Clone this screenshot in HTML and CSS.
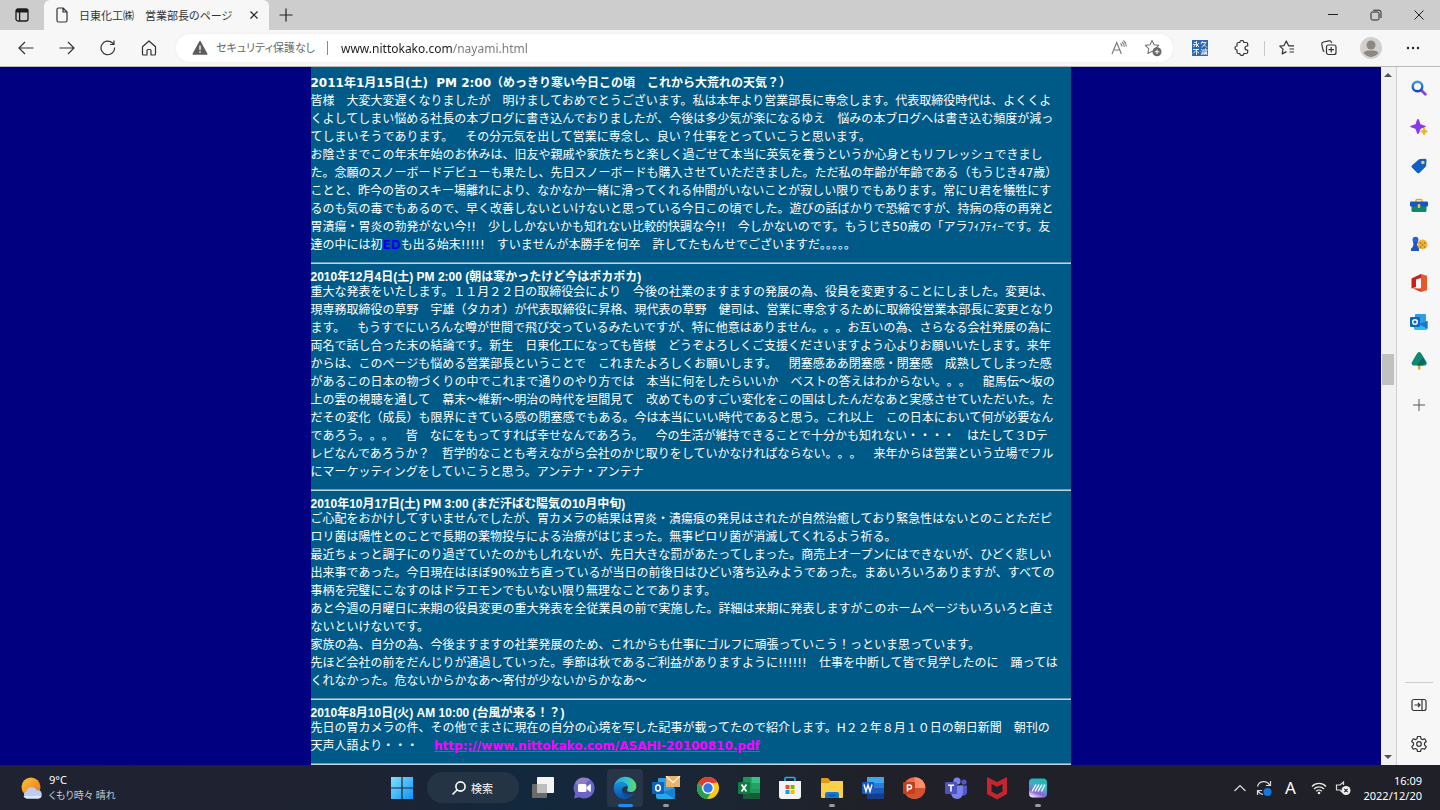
FILE: index.html
```html
<!DOCTYPE html>
<html lang="ja">
  <head>
    <meta charset="UTF-8" />
    <meta name="viewport" content="width=device-width, initial-scale=1.0" />
    <title>日東化工㈱　営業部長のページ</title>
    <link rel="stylesheet" href="styles.css">
  </head>
  <body>
    <header class="browser">
      <div class="tab-bar">
        <button class="tab-menu" aria-label="タブ操作メニュー">
          <svg width="14" height="14" viewBox="0 0 14 14" fill="none" stroke="#1c1c1c" stroke-width="1.3">
            <rect x="1" y="1" width="12" height="12" rx="2" />
            <path d="M1 2.8h12" stroke-width="3.4" />
            <path d="M4.6 4v9" />
          </svg>
        </button>
        <div class="tab">
          <svg width="12" height="16" viewBox="0 0 12 16" fill="none" stroke="#333" stroke-width="1.2" stroke-linejoin="round">
            <path d="M2.5 1H7l4 4v8.5a1.5 1.5 0 0 1-1.5 1.5h-7A1.5 1.5 0 0 1 1 13.5v-11A1.5 1.5 0 0 1 2.5 1zM7 1v4h4" />
          </svg>
          <span class="tab-title">日東化工㈱　営業部長のページ</span>
          <button class="tab-close" aria-label="タブを閉じる">
            <svg width="8" height="8" viewBox="0 0 8 8" stroke="#222" stroke-width="1.2"><path d="M.5.5l7 7M7.5.5l-7 7" /></svg>
          </button>
        </div>
        <button class="new-tab" aria-label="新しいタブ">
          <svg width="14" height="14" viewBox="0 0 14 14" stroke="#222" stroke-width="1.2"><path d="M7 .5v13M.5 7h13" /></svg>
        </button>
        <div class="window-controls">
          <button aria-label="最小化">
            <svg width="12" height="12" viewBox="0 0 12 12" stroke="#222"><path d="M1 5.5h10" /></svg>
          </button>
          <button aria-label="元に戻す">
            <svg width="12" height="12" viewBox="0 0 12 12" fill="none" stroke="#222">
              <rect x="1" y="3" width="8" height="8" rx="1.5" />
              <path d="M3.3 1.2H9a2 2 0 0 1 2 2V9" />
            </svg>
          </button>
          <button aria-label="閉じる">
            <svg width="12" height="12" viewBox="0 0 12 12" stroke="#222"><path d="M1.5 1.5l9 9M10.5 1.5l-9 9" /></svg>
          </button>
        </div>
      </div>

      <div class="toolbar">
        <nav class="nav-buttons">
          <button aria-label="戻る">
            <svg width="16" height="16" viewBox="0 0 16 16" fill="none" stroke="#333" stroke-width="1.2"><path d="M15.5 8H1M7 2L1 8l6 6" /></svg>
          </button>
          <button aria-label="進む">
            <svg width="16" height="16" viewBox="0 0 16 16" fill="none" stroke="#333" stroke-width="1.2"><path d="M.5 8H15M9 2l6 6-6 6" /></svg>
          </button>
          <button aria-label="更新">
            <svg width="16" height="16" viewBox="0 0 16 16" fill="none" stroke="#333" stroke-width="1.2"><path d="M14.6 7.5A6.8 6.8 0 1 1 12.5 3L14 4.4M14 .5v4h-4" /></svg>
          </button>
          <button aria-label="ホーム">
            <svg width="16" height="16" viewBox="0 0 16 16" fill="none" stroke="#333" stroke-width="1.2" stroke-linejoin="round"><path d="M1.5 6.8L8 1l6.5 5.8V14a1 1 0 0 1-1 1H10v-4.5a1 1 0 0 0-1-1H7a1 1 0 0 0-1 1V15H2.5a1 1 0 0 1-1-1z" /></svg>
          </button>
        </nav>

        <div class="address-bar">
          <svg width="16" height="16" viewBox="0 0 16 16">
            <path d="M8 1.5L14.8 14H1.2z" fill="#5c5c5c" stroke="#5c5c5c" stroke-width="1.5" stroke-linejoin="round" />
            <path d="M8 5.5v4.5M8 11.3v1.5" stroke="#fff" stroke-width="1.3" />
          </svg>
          <label class="security" for="url">セキュリティ保護なし</label>
          <input type="text" id="url" class="url" value="www.nittokako.com/nayami.html" />
          <button aria-label="音声で読み上げる">
            <svg width="16" height="16" viewBox="0 0 16 16" fill="none" stroke="#777" stroke-width="1.1"><path d="M1 14L5.7 2.5 10.4 14M2.6 10h6.2M9.5 3.5a4 4 0 0 1 1.5 3M11 2a6 6 0 0 1 2.2 5M12.5.5a8 8 0 0 1 2.7 6" /></svg>
          </button>
          <button aria-label="お気に入りに追加">
            <svg width="18" height="18" viewBox="0 0 18 18">
              <path d="M8 1.5l2 4.3 4.7.6-3.4 3.3.8 4.6L8 12.2l-4.1 2.2.8-4.7L1.3 6.4 6 5.8z" fill="none" stroke="#777" stroke-width="1.1" stroke-linejoin="round" />
              <circle cx="13" cy="12.8" r="4.5" fill="#666" />
              <path d="M13 10.5v4.6M10.7 12.8h4.6" stroke="#fff" />
            </svg>
          </button>
        </div>

        <div class="tool-buttons">
          <button aria-label="永久不滅プラス">
            <svg width="16" height="16" viewBox="0 0 16 16">
              <rect width="16" height="16" fill="#2f67b1" />
              <path d="M4.5 1v6M2 2.500h3M1 4.500h2.500L1.500 7M7 3L5 5l2 2M10.500 1L9 4M10 2.500h4L10 7.500M12 4.500l3 3M1 9.500h6M4.500 9.500V15M4 10.500l-3 3M5 11.500l2 1.500M9 9l1 1M8.700 11.500l1 1M9 15l1.500-2.500M10.500 10h5M11 10v5M13.500 8.500L15 15M12 12h1.500v1.500H12zM15 12l-2.500 3" fill="none" stroke="#e3ecf8" />
            </svg>
          </button>
          <button aria-label="拡張機能">
            <svg width="16" height="16" viewBox="0 0 16 16" fill="none" stroke="#333" stroke-width="1.2" stroke-linejoin="round"><path d="M5.8 2.500a2 2 0 0 1 4 0h2.400a1.500 1.500 0 0 1 1.500 1.500V6h-.7a2 2 0 0 0 0 4h.7v2a1.500 1.500 0 0 1-1.500 1.500h-2.400a2 2 0 0 1-4 0H4.500A1.500 1.500 0 0 1 3 12V10a2 2 0 0 1 0-4V4a1.500 1.500 0 0 1 1.500-1.500z" /></svg>
          </button>
        </div>
        <div class="tool-buttons with-divider">
          <button aria-label="お気に入り">
            <svg width="16" height="16" viewBox="0 0 16 16" fill="none" stroke="#333" stroke-width="1.2" stroke-linejoin="round"><path d="M9.2 5.800H15M10.500 9H15M10.500 12H15M9.500 5.600L7.300 1 5 5.600.8 6.100l3.200 3-.8 4.800L7.500 11.600" /></svg>
          </button>
          <button aria-label="コレクション">
            <svg width="16" height="16" viewBox="0 0 16 16" fill="none" stroke="#333" stroke-width="1.2"><rect x="5.5" y="5" width="9.5" height="9.5" rx="2" /><path d="M10.2 7v5.500M7.500 9.700H13M3.500 11.500A2 2 0 0 1 2 10L.8 4.200A2 2 0 0 1 2.300 2L8 .8a2 2 0 0 1 2.400 1.600L10.600 3" /></svg>
          </button>
          <button aria-label="プロファイル">
            <svg width="22" height="22" viewBox="0 0 22 22">
              <circle cx="11" cy="11" r="11" fill="#d2d0ce" />
              <circle cx="11" cy="8" r="4.5" fill="#8d8782" />
              <path d="M3.7 16c1-2 3-2.500 7.300-2.500s6.300.5 7.300 2.500a8.800 8.800 0 0 1-14.600 0z" fill="#8d8782" />
            </svg>
          </button>
          <button aria-label="設定など">
            <svg width="14" height="4" viewBox="0 0 14 4" fill="#222"><circle cx="2" cy="2" r="1.2" /><circle cx="7" cy="2" r="1.2" /><circle cx="12" cy="2" r="1.2" /></svg>
          </button>
        </div>
      </div>
    </header>

    <div class="window-body">
      <div class="viewport">
        <main class="page">
          <article>
            <h2 class="meiryo">2011年1月15日(土)&nbsp; PM 2:00（めっきり寒い今日この頃　これから大荒れの天気？）</h2>
            <p>
              皆様　大変大変遅くなりましたが　明けましておめでとうございます。私は本年より営業部長に専念します。代表取締役時代は、よくくよ<br>
              くよしてしまい悩める社長の本ブログに書き込んでおりましたが、今後は多少気が楽になるゆえ　悩みの本ブログへは書き込む頻度が減っ<br>
              てしまいそうであります。　その分元気を出して営業に専念し、良い？仕事をとっていこうと思います。<br>
              お陰さまでこの年末年始のお休みは、旧友や親戚や家族たちと楽しく過ごせて本当に英気を養うというか心身ともリフレッシュできまし<br>
              た。念願のスノーボードデビューも果たし、先日スノーボードも購入させていただきました。ただ私の年齢が年齢である（もうじき47歳）<br>
              ことと、昨今の皆のスキー場離れにより、なかなか一緒に滑ってくれる仲間がいないことが寂しい限りでもあります。常にＵ君を犠牲にす<br>
              るのも気の毒でもあるので、早く改善しないといけないと思っている今日この頃でした。遊びの話ばかりで恐縮ですが、持病の痔の再発と<br>
              胃潰瘍・胃炎の勃発がない今!!　少ししかないかも知れない比較的快調な今!!　今しかないのです。もうじき50歳の「アラﾌｨﾌﾃｨｰです。友<br>
              達の中には初<b class="ed">ED</b>も出る始末!!!!!　すいませんが本勝手を何卒　許してたもんせでございますだ｡｡｡｡｡
            </p>
          </article>
          <hr>
          <article>
            <h2>2010年12月4日(土) PM 2:00 (朝は寒かったけど今はポカポカ)</h2>
            <p>
              重大な発表をいたします。１１月２２日の取締役会により　今後の社業のますますの発展の為、役員を変更することにしました。変更は、<br>
              現専務取締役の草野　宇雄（タカオ）が代表取締役に昇格、現代表の草野　健司は、営業に専念するために取締役営業本部長に変更となり<br>
              ます。　もうすでにいろんな噂が世間で飛び交っているみたいですが、特に他意はありません。。。お互いの為、さらなる会社発展の為に<br>
              両名で話し合った末の結論です。新生　日東化工になっても皆様　どうぞよろしくご支援くださいますよう心よりお願いいたします。来年<br>
              からは、このページも悩める営業部長ということで　これまたよろしくお願いします。　閉塞感ああ閉塞感・閉塞感　成熟してしまった感<br>
              があるこの日本の物づくりの中でこれまで通りのやり方では　本当に何をしたらいいか　ベストの答えはわからない。。。　龍馬伝～坂の<br>
              上の雲の視聴を通して　幕末～維新～明治の時代を垣間見て　改めてものすごい変化をこの国はしたんだなあと実感させていただいた。た<br>
              だその変化（成長）も限界にきている感の閉塞感でもある。今は本当にいい時代であると思う。これ以上　この日本において何が必要なん<br>
              であろう。。。　皆　なにをもってすれば幸せなんであろう。　今の生活が維持できることで十分かも知れない・・・・　はたして３Dテ<br>
              レビなんであろうか？　哲学的なことも考えながら会社のかじ取りをしていかなければならない。。。　来年からは営業という立場でフル<br>
              にマーケッティングをしていこうと思う。アンテナ・アンテナ
            </p>
          </article>
          <hr>
          <article>
            <h2>2010年10月17日(土) PM 3:00 (まだ汗ばむ陽気の10月中旬)</h2>
            <p>
              ご心配をおかけしてすいませんでしたが、胃カメラの結果は胃炎・潰瘍痕の発見はされたが自然治癒しており緊急性はないとのことただピ<br>
              ロリ菌は陽性とのことで長期の薬物投与による治療がはじまった。無事ピロリ菌が消滅してくれるよう祈る。<br>
              最近ちょっと調子にのり過ぎていたのかもしれないが、先日大きな罰があたってしまった。商売上オープンにはできないが、ひどく悲しい<br>
              出来事であった。今日現在はほぼ90%立ち直っているが当日の前後日はひどい落ち込みようであった。まあいろいろありますが、すべての<br>
              事柄を完璧にこなすのはドラエモンでもいない限り無理なことであります。<br>
              あと今週の月曜日に来期の役員変更の重大発表を全従業員の前で実施した。詳細は来期に発表しますがこのホームページもいろいろと直さ<br>
              ないといけないです。<br>
              家族の為、自分の為、今後ますますの社業発展のため、これからも仕事にゴルフに頑張っていこう！っといま思っています。<br>
              先ほど会社の前をだんじりが通過していった。季節は秋であるご利益がありますように!!!!!!　仕事を中断して皆で見学したのに　踊っては<br>
              くれなかった。危ないからかなあ～寄付が少ないからかなあ～
            </p>
          </article>
          <hr>
          <article>
            <h2>2010年8月10日(火) AM 10:00 (台風が来る！？)</h2>
            <p>
              先日の胃カメラの件、その他でまさに現在の自分の心境を写した記事が載ってたので紹介します。H２２年８月１０日の朝日新聞　朝刊の<br>
              天声人語より・・・　 <a href="#">http:;//www.nittokako.com/ASAHI-20100810.pdf</a>
            </p>
          </article>
          <hr>
        </main>
      </div>

      <div class="scrollbar" aria-hidden="true">
        <span class="arrow up"></span>
        <span></span>
        <span class="thumb"></span>
        <span></span>
        <span class="arrow down"></span>
      </div>

      <aside class="sidebar">
        <button aria-label="検索">
          <svg width="16" height="16" viewBox="0 0 16 16" fill="none">
            <path d="M10 10l4.3 4.3" stroke="#8b3ff0" stroke-width="2.8" stroke-linecap="round" />
            <circle cx="6.5" cy="6.5" r="4.8" stroke="url(#lens)" stroke-width="2.4" />
            <defs><linearGradient id="lens" x1="0" y1="0" x2="0" y2="1"><stop stop-color="#3a9be0" /><stop offset="1" stop-color="#1546c8" /></linearGradient></defs>
          </svg>
        </button>
        <button aria-label="検出">
          <svg width="18" height="18" viewBox="0 0 18 18">
            <path d="M8 1c.5 0 .8.3 1 .8l1.200 3.600c.2.600.5.900 1.100 1.100L15 7.700c1 .3 1 1.300 0 1.600l-3.700 1.200c-.6.200-.9.500-1.100 1.100L9 15.200c-.3 1-1.700 1-2 0l-1.200-3.600c-.2-.6-.5-.9-1.100-1.100L1 9.300c-1-.3-1-1.300 0-1.600l3.700-1.200c.6-.2.900-.5 1.100-1.100L7 1.800c.2-.5.500-.8 1-.8z" fill="#8c38ec" />
            <path d="M14 10l1 2.500 2.500 1-2.500 1-1 2.500-1-2.500-2.500-1 2.500-1z" fill="#f0b51e" stroke="#f0b51e" />
          </svg>
        </button>
        <button aria-label="ショッピング">
          <svg width="18" height="18" viewBox="0 0 18 18"><path d="M10.500 2L15 1.800c1 0 1.500.5 1.500 1.500l-.3 5c0 .6-.2 1-.6 1.400l-6 6c-.8.8-1.700.8-2.500 0l-5-5c-.8-.8-.8-1.700 0-2.500L8.500 2.700c.5-.5 1-.7 2-.7z" fill="#1360c4" /><circle cx="12.8" cy="5.5" r="1.8" fill="#f6cc48" /></svg>
        </button>
        <button aria-label="ツール">
          <svg width="18" height="18" viewBox="0 0 18 18"><path d="M6 6V4.500c0-.6.400-1 1-1h4c.6 0 1 .4 1 1V6" fill="none" stroke="#e2a928" stroke-width="1.3" /><path d="M1.500 9h15v5.500A1.500 1.500 0 0 1 15 16H3a1.500 1.500 0 0 1-1.500-1.500z" fill="#12856b" /><rect x="0" y="5.5" width="18" height="5" rx="1.2" fill="#1456c8" /><rect x="7.7" y="8" width="2.6" height="4" rx="1" fill="#f2c23c" /></svg>
        </button>
        <button aria-label="ゲーム">
          <svg width="18" height="18" viewBox="0 0 18 18"><circle cx="5.5" cy="4.8" r="3" fill="#2864d8" /><path d="M3 7h5v1.200H7c0 2 .5 3.300 2 4.500V16H1v-2.500c2.200-1.500 2.500-3 2.500-5.300H3z" fill="#1b55c8" /><circle cx="12.5" cy="9.5" r="5" fill="#efb43c" /><g fill="#9a6512"><circle cx="10.5" cy="8" r=".8" /><circle cx="14.5" cy="8" r=".8" /><circle cx="12.5" cy="10" r=".8" /><circle cx="10.5" cy="12" r=".8" /><circle cx="14.5" cy="12" r=".8" /></g></svg>
        </button>
        <button aria-label="Office">
          <svg width="18" height="18" viewBox="0 0 18 18"><path d="M11 0l6 1.800v14.400L11 18z" fill="#e8572a" /><path d="M1.500 4.500L11 0v4L6 5.500v7.500l-4.500 1.500z" fill="#c8201a" /><path d="M2.500 14.300L11 14.500V18z" fill="#e03a20" /></svg>
        </button>
        <button aria-label="Outlook">
          <svg width="18" height="18" viewBox="0 0 18 18"><rect x="5" y="1" width="11" height="14" rx="1" fill="#2e9de6" /><path d="M4 8l6.500 4L17.500 7.500V15a2 2 0 0 1-2 2h-10A1.500 1.500 0 0 1 4 15.500z" fill="#2bbdf0" /><path d="M17.500 8v8L9 11z" fill="#1778c9" /><rect x="0" y="4" width="10" height="10" rx="1" fill="#0f67b8" /><circle cx="5" cy="9" r="2.300" fill="none" stroke="#fff" stroke-width="1.4" /></svg>
        </button>
        <button aria-label="ドロップ">
          <svg width="18" height="18" viewBox="0 0 18 18"><path d="M8 11h2.400v6.500H8z" fill="#dda325" /><path d="M9.200 0c1.200 0 2.300 1.800 3.400 3.600l3.500 6c1.400 2.300.5 4-2 4H4.300c-2.500 0-3.400-1.700-2-4l3.500-6C6.900 1.800 8 0 9.200 0z" fill="#128873" /><path d="M9 10l4-4 2.600 4-2.600 3.600H7z" fill="#0b6a62" /></svg>
        </button>
        <button class="add" aria-label="カスタマイズ">
          <svg width="12" height="12" viewBox="0 0 12 12" stroke="#555"><path d="M6 0v12M0 6h12" /></svg>
        </button>
        <div class="sidebar-bottom">
          <button aria-label="サイドバーを隠す">
            <svg width="16" height="14" viewBox="0 0 16 14" fill="none" stroke="#333" stroke-width="1.2"><rect x="1" y="1.5" width="14" height="11" rx="2" /><path d="M11 1.500v11M3.500 7H9M7 5l2 2-2 2" /></svg>
          </button>
          <button aria-label="設定">
            <svg width="18" height="18" viewBox="0 0 18 18" fill="none" stroke="#333" stroke-width="1.2" stroke-linejoin="round"><path d="M7.500 1.500h3l.5 2.300 1.500.8 2.200-.8 1.600 2.700L14.500 8v2l1.800 1.600-1.600 2.700-2.200-.8-1.500.8-.5 2.200h-3L7 14.300l-1.500-.8-2.200.8-1.600-2.700L3.500 10V8L1.700 6.500l1.600-2.700 2.200.8L7 3.800z" /><circle cx="9" cy="9" r="2.3" /></svg>
          </button>
        </div>
      </aside>
    </div>

    <footer class="taskbar">
      <button class="weather">
        <svg width="22" height="22" viewBox="0 0 22 22">
          <defs><linearGradient id="sun" x1="0" y1="0" x2="1" y2="1"><stop stop-color="#f8c63a" /><stop offset="1" stop-color="#ee6d18" /></linearGradient></defs>
          <circle cx="10" cy="10" r="9.5" fill="url(#sun)" />
          <path d="M5.500 21.500a4 4 0 0 1 0-7.500 5.500 5.500 0 0 1 10.300-.5 4 4 0 0 1 1.700 8z" fill="#bccdf1" />
          <path d="M5.500 21.500a4 4 0 0 1-3-2.500h18a4 4 0 0 1-3 2.500z" fill="#dfe8fb" />
        </svg>
        <span class="weather-text">9°C<br><span class="weather-desc">くもり時々 晴れ</span></span>
      </button>

      <div class="task-center">
        <button class="app" aria-label="スタート">
          <svg width="22" height="22" viewBox="0 0 22 22"><defs><linearGradient id="win" x1="0" y1="0" x2="1" y2="1"><stop stop-color="#7fe0fd" /><stop offset="1" stop-color="#0f93f5" /></linearGradient></defs><path d="M0 0h10.400v10.400H0zM11.600 0H22v10.400H11.600zM0 11.600h10.400V22H0zM11.600 11.600H22V22H11.600z" fill="url(#win)" /></svg>
        </button>
        <button class="search">
          <svg width="14" height="14" viewBox="0 0 14 14" fill="none" stroke="#fff" stroke-width="1.6" stroke-linecap="round"><circle cx="8.5" cy="5.5" r="4.6" /><path d="M5 9l-4 4" /></svg>
          検索
        </button>
        <div class="apps">
          <button class="app" aria-label="タスク ビュー">
            <svg width="24" height="24" viewBox="0 0 24 24"><rect x="1" y="8" width="15" height="14" rx="1" fill="#6a6a6a" /><rect x="6" y="1" width="17" height="16" rx="1" fill="#f4f4f4" /><path d="M6 8h10v9H6z" fill="#bdbdbd" /></svg>
          </button>
          <button class="app" aria-label="チャット">
            <svg width="24" height="24" viewBox="0 0 24 24"><path d="M12 1.500a10.500 10.500 0 1 1-4.800 19.800L2 22.500l1.200-5A10.500 10.500 0 0 1 12 1.500z" fill="#6a63c8" /><path d="M3.200 6.500A10.500 10.500 0 0 1 18 3.500L8 12z" fill="#8e80c8" /><rect x="6" y="8" width="8.5" height="8" rx="1.5" fill="#fff" /><path d="M15.300 11l3-2.500v7l-3-2.500z" fill="#fff" stroke="#fff" stroke-linejoin="round" /></svg>
          </button>
          <button class="app active" aria-label="Microsoft Edge">
            <svg width="24" height="24" viewBox="0 0 24 24">
              <defs>
                <linearGradient id="edge1" x1="0" y1="0" x2="1" y2="0"><stop stop-color="#1da4e0" /><stop offset=".6" stop-color="#35c3cf" /><stop offset="1" stop-color="#64dd53" /></linearGradient>
                <linearGradient id="edge2" x1="0" y1="0" x2="0" y2="1"><stop stop-color="#1790e0" /><stop offset="1" stop-color="#0b4fa5" /></linearGradient>
              </defs>
              <path d="M.8 11A11.300 11.300 0 0 1 12 .8c6.700 0 11.300 4.700 11.300 9.700 0 3.500-2.600 5.500-5.600 5.500-2.500 0-3.700-.9-3.700-1.700 0-.7.9-1.200.9-2.800 0-2.500-2.400-5-6.400-5C5 6.500 2 8.500.8 11z" fill="url(#edge1)" />
              <path d="M.8 11C2 8 5 6.500 8.500 6.500c3.500 0 6 2 6.400 4.500-1-1.500-5.400-1-5.900 3-.5 4.500 4 7.500 8.500 5.700-1.500 2-3.500 3.500-6 3.500A11.200 11.200 0 0 1 .8 11z" fill="url(#edge2)" />
              <path d="M9 13c-1.500 4.500 2 8.500 7 8.500 2.500-.8 4.500-2.500 5.700-4.700-5 3-12.300 1-12.700-3.800z" fill="#0c4d9d" />
            </svg>
          </button>
          <button class="app open" aria-label="Outlook">
            <svg width="30" height="24" viewBox="0 0 30 24"><rect x="7" y="2" width="16" height="19" rx="1" fill="#2c9ee8" /><path d="M5 12l9 6 10-6v9a2 2 0 0 1-2 2H7a2 2 0 0 1-2-2z" fill="#27a8ec" /><path d="M24 12v11L12 16z" fill="#1481d3" /><rect x="1" y="6" width="12" height="12" rx="1" fill="#0d63bb" /><ellipse cx="7" cy="12" rx="2.3" ry="3" fill="none" stroke="#fff" stroke-width="1.6" /><path d="M15 0h14v11H15z" fill="#e8b36c" /><path d="M15 0l7 6.500L29 0" fill="none" stroke="#fff3da" stroke-width="1.3" /></svg>
          </button>
          <button class="app" aria-label="Google Chrome">
            <svg width="24" height="24" viewBox="0 0 24 24"><circle cx="12" cy="12" r="11" fill="#f8c91f" /><path d="M2.500 6.500a11 11 0 0 1 19 0L12 7.500 8 14z" fill="#e33b2e" /><path d="M2.500 6.500A11 11 0 0 0 11 23l5.500-8.500-8.700.5z" fill="#24a052" /><circle cx="12" cy="12" r="6" fill="#fff" /><circle cx="12" cy="12" r="4.7" fill="#3478e5" /></svg>
          </button>
          <button class="app" aria-label="Excel">
            <svg width="24" height="24" viewBox="0 0 24 24"><rect x="6" y="1" width="17" height="22" rx="1" fill="#1c9757" /><path d="M14.500 1H22a1 1 0 0 1 1 1v5h-8.500z" fill="#35c481" /><path d="M14.500 7H23v6h-8.500z" fill="#22a366" /><path d="M6 17h17v5a1 1 0 0 1-1 1H7a1 1 0 0 1-1-1z" fill="#185c37" /><rect x="1" y="6" width="12" height="12" rx="1" fill="#107c41" /><path d="M4.500 8.500l5 7M9.500 8.500l-5 7" stroke="#fff" stroke-width="1.8" /></svg>
          </button>
          <button class="app" aria-label="Microsoft Store">
            <svg width="24" height="24" viewBox="0 0 24 24"><path d="M7 6V2.500a1 1 0 0 1 1-1h8a1 1 0 0 1 1 1V6" fill="none" stroke="#23aee5" stroke-width="1.6" /><path d="M1 5h22v15a3 3 0 0 1-3 3H4a3 3 0 0 1-3-3z" fill="#f3f3f3" /><path d="M7.500 9h4v4h-4z" fill="#ef4c26" /><path d="M12.500 9h4v4h-4z" fill="#80b800" /><path d="M7.500 14h4v4h-4z" fill="#0aa2ed" /><path d="M12.500 14h4v4h-4z" fill="#fbb900" /></svg>
          </button>
          <button class="app open" aria-label="エクスプローラー">
            <svg width="24" height="24" viewBox="0 0 24 24"><path d="M1 3a1 1 0 0 1 1-1h6l2.500 3H22a1 1 0 0 1 1 1v6H1z" fill="#e09b10" /><path d="M1 7h8l2-2h11a1 1 0 0 1 1 1v15a1 1 0 0 1-1 1H2a1 1 0 0 1-1-1z" fill="#fcd04a" /><path d="M5 22v-4a2 2 0 0 1 2-2h10a2 2 0 0 1 2 2v4z" fill="#1678c9" /><path d="M8.500 19.500h7" stroke="#0c559c" stroke-width="1.5" /></svg>
          </button>
          <button class="app" aria-label="Word">
            <svg width="24" height="24" viewBox="0 0 24 24"><rect x="6" y="1" width="17" height="22" rx="1" fill="#2b7cd3" /><path d="M6 2a1 1 0 0 1 1-1h15a1 1 0 0 1 1 1v5H6z" fill="#41a5ee" /><path d="M6 12h17v6H6z" fill="#185abd" /><path d="M6 17.500h17V22a1 1 0 0 1-1 1H7a1 1 0 0 1-1-1z" fill="#103f91" /><rect x="1" y="6" width="12" height="12" rx="1" fill="#185abd" /><path d="M3 8.500l2 7 2-6.500 2 6.500 2-7" fill="none" stroke="#fff" stroke-width="1.4" /></svg>
          </button>
          <button class="app" aria-label="PowerPoint">
            <svg width="24" height="24" viewBox="0 0 24 24"><circle cx="12.5" cy="12" r="10.8" fill="#ed6c47" /><path d="M12.500 1.200A10.800 10.800 0 0 1 23.300 12H12.500z" fill="#ff8f6b" /><path d="M1.700 12h21.600a10.800 10.800 0 0 1-21.600 0z" fill="#d35230" /><rect x="1" y="6" width="12" height="12" rx="1" fill="#c43e1c" /><path d="M5.500 15.500v-6.500h2a2 2 0 0 1 0 4h-2" fill="none" stroke="#fff" stroke-width="1.6" /></svg>
          </button>
          <button class="app" aria-label="Teams">
            <svg width="24" height="24" viewBox="0 0 24 24"><circle cx="13" cy="5" r="3.6" fill="#7b83eb" /><circle cx="20" cy="6" r="2.6" fill="#5059c9" /><path d="M16 9.500h7v7a3.500 3.500 0 0 1-6 2z" fill="#5059c9" /><path d="M7 9.500h12V17a6 6 0 0 1-12 0z" fill="#7b83eb" /><rect x="1" y="6" width="12" height="12" rx="1" fill="#4b53bc" /><path d="M4 9.300h6M7 9.300v6.200" stroke="#fff" stroke-width="1.6" /></svg>
          </button>
          <button class="app" aria-label="McAfee">
            <svg width="24" height="24" viewBox="0 0 24 24"><path d="M2 1l10 5 10-5v17l-10 5.500L2 18zM6.500 8v7.500l5.500 3 5.500-3V8L12 10.700z" fill="#c5262d" fill-rule="evenodd" /></svg>
          </button>
          <button class="app open" aria-label="画面共有">
            <svg width="24" height="24" viewBox="0 0 24 24"><defs><linearGradient id="share" x1=".7" y1="0" x2=".3" y2="1"><stop stop-color="#14c0b0" /><stop offset=".45" stop-color="#45a9ce" /><stop offset=".75" stop-color="#8f62da" /><stop offset="1" stop-color="#e9e6fa" /></linearGradient></defs><rect x="3" y="2.5" width="18" height="19" rx="4" fill="url(#share)" /><path d="M6 15.500l4-7M9 15.500l4-7M12 15.500l4-7M15.500 15.500l3.500-7" stroke="#fff" stroke-width="1.4" /></svg>
          </button>
        </div>
      </div>

      <div class="tray">
        <button aria-label="隠れているインジケーター">
          <svg width="14" height="14" viewBox="0 0 14 14" fill="none" stroke="#ddd" stroke-width="1.2"><path d="M1.500 10L7 4.500l5.500 5.500" /></svg>
        </button>
        <button aria-label="更新プログラム">
          <svg width="18" height="18" viewBox="0 0 18 18" fill="none" stroke="#ddd" stroke-width="1.2"><path d="M2.500 7.500A6.500 6.500 0 0 1 14.500 6M15.500 2v4.500H11M2.500 16v-4.500H7M3 11.800A6.500 6.500 0 0 0 8 15.500" /><circle cx="12.5" cy="13" r="4" fill="#1479dc" stroke="none" /></svg>
        </button>
        <button class="ime" aria-label="入力モード">A</button>
        <button aria-label="ネットワーク">
          <svg width="16" height="14" viewBox="0 0 16 14" fill="none" stroke="#e6e6e6" stroke-width="1.3"><path d="M1 5.500a9.500 9.500 0 0 1 14 0M3 8a6.800 6.800 0 0 1 10 0M5.200 10.200a4 4 0 0 1 5.600 0" /><circle cx="8" cy="12" r="1.3" fill="#e6e6e6" stroke="none" /></svg>
        </button>
        <button aria-label="音量">
          <svg width="16" height="16" viewBox="0 0 16 16" fill="none" stroke="#ddd" stroke-width="1.2"><path d="M8.500 5V2L5 5H1.500v5H5l2 2" /><circle cx="11" cy="10.5" r="4.5" fill="#eee" stroke="none" /><path d="M9.300 8.800l3.400 3.400M12.700 8.800l-3.400 3.400" stroke="#222" /></svg>
        </button>
        <button class="clock">16:09<br>2022/12/20</button>
      </div>
    </footer>
  </body>
</html>
```
FILE: styles.css
```css
* {
  box-sizing: border-box;
}

body {
  height: 100vh;
  margin: 0;
  display: flex;
  flex-direction: column;
  overflow: hidden;
  background: #f7f7f7;
  font-family: "Noto Sans", "Noto Sans CJK JP", sans-serif;
  font-size: 12px;
}

button {
  display: flex;
  align-items: center;
  justify-content: center;
  flex: none;
  margin: 0;
  padding: 0;
  border: 0;
  background: none;
  color: inherit;
  font: inherit;
}

svg {
  display: block;
  flex: none;
}

/* tabs */

.tab-bar {
  display: flex;
  height: 30px;
  background: #cdcdcd;
}

.tab-menu {
  width: 44px;
}

.tab {
  display: flex;
  align-items: center;
  width: 225px;
  padding: 0 11px 0 12px;
  background: #f7f7f7;
  border-radius: 6px 6px 0 0;
}

.tab-title {
  flex: 1;
  margin-left: 11px;
  font-size: 11px;
  font-feature-settings: "palt";
  white-space: nowrap;
  color: #333;
}

.new-tab {
  width: 34px;
}

.window-controls {
  display: flex;
  margin-left: auto;
}

.window-controls button {
  width: 43px;
}

/* toolbar */

.toolbar {
  display: flex;
  align-items: center;
  gap: 13px;
  height: 37px;
  padding: 0 13px 0 12px;
  border-bottom: 1px solid #b8b8b8;
  background: #f7f7f7;
}

.toolbar button {
  width: 28px;
  height: 28px;
}

.nav-buttons {
  display: flex;
  gap: 13px;
}

.address-bar {
  display: flex;
  flex: 1;
  align-items: center;
  height: 28px;
  padding: 0 6px 0 16px;
  border-radius: 14px;
  background: #fff;
  box-shadow: 0 0 3px rgba(0, 0, 0, 0.06);
}

.address-bar button + button {
  margin-left: 6px;
}

.security {
  margin-left: 8px;
  padding-right: 12px;
  border-right: 1px solid #888;
  color: #666;
  font-size: 11px;
  font-feature-settings: "palt";
  line-height: 14px;
}

.url {
  flex: 1;
  margin-left: 13px;
  padding: 0;
  border: 0;
  outline: 0;
  font-family: "Noto Sans", sans-serif;
  font-size: 12px;
  color: transparent;
  background: linear-gradient(90deg, #1c1c1c 111px, #767676 111px);
  background-clip: text;
  -webkit-background-clip: text;
}

.tool-buttons {
  display: flex;
  align-items: center;
  gap: 14px;
}

.with-divider {
  margin-left: -5px;
}

.with-divider::before {
  content: "";
  width: 1px;
  height: 15px;
  margin-right: -6px;
  background: #c8c8c8;
}

/* page */

.window-body {
  display: flex;
  flex: 1;
  min-height: 0;
}

.viewport {
  flex: 1;
  overflow: hidden;
  background: #000080;
}

.page {
  max-width: 760px;
  min-height: 100%;
  margin: 0 auto;
  padding-top: 7px;
  background: #005a87;
  color: #fff;
  font-family: "DejaVu Sans", "Noto Sans CJK JP", sans-serif;
  font-size: 12px;
  line-height: 18px;
  text-spacing-trim: space-all;
  white-space: nowrap;
}

.page p {
  margin: 0;
}

.page h2 {
  margin: 0;
  font-family: "Liberation Sans", "Noto Sans CJK JP", sans-serif;
  font-size: 12px;
  font-weight: bold;
  line-height: 12px;
}

.page h2.meiryo {
  font-family: "DejaVu Sans", "Noto Sans CJK JP", sans-serif;
  line-height: 18px;
}

.page hr {
  height: 2px;
  margin: 8px 0 7px;
  border: 0;
  border-top: 1px solid #6f9bb2;
  border-bottom: 1px solid #c3d5de;
}

.ed {
  color: #0000ff;
}

.page a {
  color: #ff00ff;
  font-weight: bold;
}

/* scrollbar */

.scrollbar {
  display: grid;
  grid-template-rows: 16px 271fr 31px 364fr 16px;
  width: 16px;
  padding: 0 2px 0 1px;
  border-right: 1px solid #cfcfcf;
  background: #f1f1f1;
}

.thumb {
  background: #c1c1c1;
}

.arrow {
  place-self: center;
  border: 4px solid transparent;
}

.up {
  border-top: 0;
  border-bottom-color: #505050;
}

.down {
  border-bottom: 0;
  border-top-color: #505050;
}

/* sidebar */

.sidebar {
  display: flex;
  flex-direction: column;
  align-items: center;
  width: 43px;
  padding-top: 11px;
}

.sidebar button {
  width: 28px;
  height: 20px;
  margin-bottom: 19px;
}

.sidebar .add {
  margin-top: 5px;
}

.sidebar-bottom {
  margin-top: auto;
  padding-top: 12px;
  border-top: 1px solid #ccc;
}

.sidebar-bottom button:last-child {
  margin-bottom: 11px;
}

/* taskbar */

.taskbar {
  display: grid;
  grid-template-columns: 1fr auto 1fr;
  align-items: center;
  height: 45px;
  background: linear-gradient(90deg, #1f2230 0%, #1e2332 25%, #12283d 36%, #1c2533 50%, #202128 60%, #202128 100%);
  color: #fff;
}

.weather {
  justify-self: start;
  margin-left: 21px;
  gap: 6px;
  text-align: left;
}

.weather-text {
  font-size: 11px;
  line-height: 15px;
}

.weather-desc {
  color: #c4c6cb;
  font-size: 10px;
  font-feature-settings: "palt";
}

.task-center {
  display: flex;
  align-items: center;
}

.search {
  gap: 5px;
  width: 92px;
  height: 31px;
  margin: 0 6px 0 7px;
  border-radius: 16px;
  background: #253445;
  font-size: 11px;
}

.apps {
  display: flex;
  justify-content: space-between;
  width: 532px;
}

.app {
  position: relative;
  width: 36px;
  height: 38px;
}

.active {
  border-radius: 4px;
  background: #263548;
}

.active::after,
.open::after {
  content: "";
  position: absolute;
  bottom: 0;
  width: 6px;
  height: 3px;
  border-radius: 2px;
  background: #999;
}

.active::after {
  width: 15px;
  background: #1b8df5;
}

.tray {
  display: flex;
  align-items: center;
  justify-self: end;
  gap: 8px;
  margin-right: 18px;
}

.ime {
  width: 18px;
  margin-right: 4px;
  font-size: 17px;
}

.clock {
  margin-left: 4px;
  font-size: 11px;
  line-height: 15px;
  text-align: right;
}
```
